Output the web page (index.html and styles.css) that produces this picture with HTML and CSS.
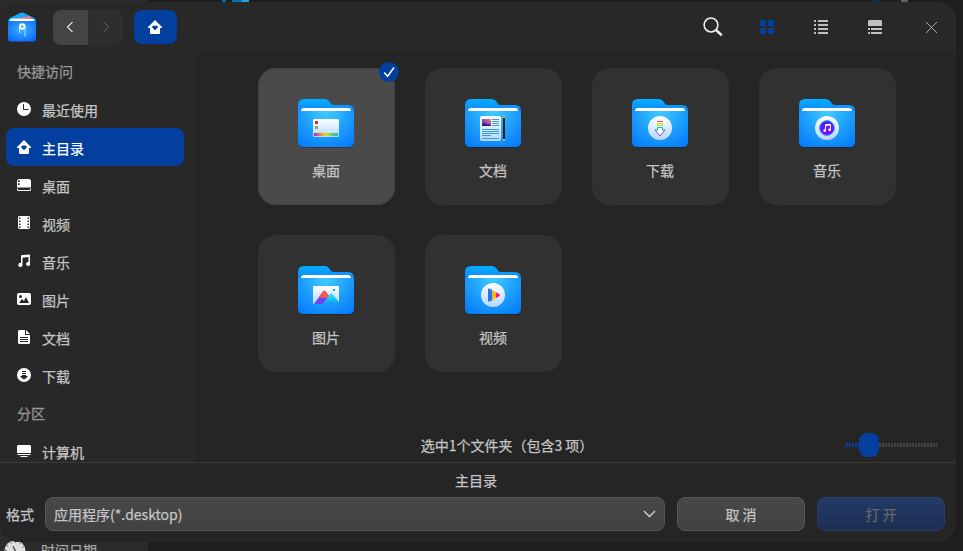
FILE: index.html
```html
<!DOCTYPE html>
<html lang="zh-CN">
<head>
<meta charset="utf-8">
<title>主目录</title>
<link rel="stylesheet" href="styles.css">
</head>
<body>
<svg class="defs" width="0" height="0" aria-hidden="true">
  <defs>
    <linearGradient id="back" x1="0" y1="0" x2="0" y2="1"><stop offset="0" stop-color="#02aeff"/><stop offset=".25" stop-color="#1487fa"/><stop offset="1" stop-color="#0a7cfa"/></linearGradient>
    <radialGradient id="front" gradientUnits="userSpaceOnUse" cx="28" cy="12" r="44"><stop offset="0" stop-color="#42cdff"/><stop offset=".5" stop-color="#1fa1fc"/><stop offset="1" stop-color="#0379fb"/></radialGradient>
    <linearGradient id="paper" x1="0" y1="0" x2="0" y2="1"><stop offset="0" stop-color="#fff"/><stop offset="1" stop-color="#b4d8fc"/></linearGradient>
    <linearGradient id="rainbow"><stop offset="0" stop-color="#9c1df0"/><stop offset=".25" stop-color="#e5863f"/><stop offset=".5" stop-color="#e9e20c"/><stop offset=".75" stop-color="#62cc66"/><stop offset="1" stop-color="#16bdea"/></linearGradient>
    <linearGradient id="photo" x1="0" y1="1" x2="1" y2="0"><stop offset="0" stop-color="#3526d4"/><stop offset=".6" stop-color="#b5519e"/><stop offset="1" stop-color="#ff8a65"/></linearGradient>
    <linearGradient id="arrow" x1="0" y1="0" x2="0" y2="1"><stop offset="0" stop-color="#1fc68f"/><stop offset=".4" stop-color="#2378ea"/><stop offset="1" stop-color="#a22be8"/></linearGradient>
    <linearGradient id="disc" x1="0" y1="0" x2="0" y2="1"><stop offset="0" stop-color="#3926f6"/><stop offset="1" stop-color="#8a05f5"/></linearGradient>
    <linearGradient id="peak" x1="0" y1="0" x2="0" y2="1"><stop offset="0" stop-color="#35eafc"/><stop offset="1" stop-color="#0b9df2"/></linearGradient>
    <radialGradient id="app" cx=".5" cy=".4" r=".7"><stop offset="0" stop-color="#3cb5ff"/><stop offset="1" stop-color="#0865fa"/></radialGradient>
    <symbol id="folder" viewBox="0 0 56 50">
      <path d="M0 46V6Q0 0 6 0H27Q30 0 31.500 2.500L33 4.800Q34 6 36 6H50Q56 6 56 12V43Q56 49 50 49H6Q0 49 0 43Z" fill="#000" opacity=".25"/>
      <path d="M0 42V6Q0 0 6 0H27Q30 0 31.500 2.500L33 4.800Q34 6 36 6H50Q56 6 56 12V42Q56 48 50 48H6Q0 48 0 42Z" fill="url(#back)"/>
      <path d="M3 12Q3 9 6 9H50Q53 9 53 12Z" fill="#fff"/>
      <path d="M0 12H56V42Q56 48 50 48H6Q0 48 0 42Z" fill="url(#front)"/>
    </symbol>
    <symbol id="home" viewBox="0 0 14 14">
      <path fill-rule="evenodd" d="M7 0 14 7V8H12V13Q12 14 11 14H3Q2 14 2 13V8H0V7ZM7 10.200 9.600 7.700Q10 7 9.600 6.300Q9 5.500 8 5.600L7 6 6 5.600Q5 5.500 4.400 6.300Q4 7 4.400 7.700Z"/>
    </symbol>
    <symbol id="notes" viewBox="0 0 14 14">
      <path d="M4 1.200 12 .5Q13 .5 13 1.300V9.500A2 2 0 1 1 11.500 8V3L5.500 3.700V11A2.100 2.100 0 1 1 4 9Z"/>
    </symbol>
  </defs>
</svg>

<div class="backdrop backdrop-top"><span class="scrap scrap-a"></span><span class="scrap scrap-b"></span><span class="scrap scrap-c"></span><span class="scrap scrap-d"></span></div>
<div class="backdrop backdrop-bottom">
  <svg class="clock" width="22" height="22" viewBox="0 0 22 22"><circle cx="11" cy="11" r="10.500" fill="#dedede"/><circle cx="11" cy="11" r="9" fill="none" stroke="#666" stroke-width="1.500" stroke-dasharray="1 3.700"/><path d="M9 6.500 12 12" stroke="#333" stroke-width="1.200"/></svg>
  <span>时间日期</span>
</div>

<div class="window">
  <header class="titlebar">
    <svg class="applogo" width="28" height="32" viewBox="0 0 28 32">
      <path d="M0 10Q0 6 4 5L12 1Q14 0 16 1L24 5Q28 6 28 10Z" fill="#16a8fb"/>
      <path d="M2 8 22 4 24 9H2Z" fill="#ff6b88"/><path d="M2 9Q2 6.500 5 6.500L26 7V11H2Z" fill="#fff"/>
      <path d="M0 9H28V27Q28 29.500 25.500 29.500H2.500Q0 29.500 0 27Z" fill="url(#app)"/><path d="M2 9V8Q2 7 4 7H24Q26 7 26 8V9Z" fill="#fff"/>
      <path d="M11.500 16V21" stroke="#bde4ff"/><path d="M17 16V24.500" stroke="#69c0ff" stroke-width="2"/><circle cx="14.300" cy="14.500" r="2.200" fill="none" stroke="#fff" stroke-width="1.900"/>
    </svg>
    <div class="nav">
      <button class="navbtn back"><svg width="8" height="12" viewBox="0 0 8 12"><path d="M6.500 1 1.500 6 6.500 11" /></svg></button>
      <button class="navbtn forward"><svg width="8" height="12" viewBox="0 0 8 12"><path d="M1.500 1 6.500 6 1.500 11" /></svg></button>
    </div>
    <button class="crumb"><svg width="14" height="14"><use href="#home"/></svg></button>
    <div class="tools">
      <svg class="search" width="20" height="20" viewBox="0 0 20 20"><circle cx="8" cy="8" r="6.900" fill="none" stroke="#f2f2f2" stroke-width="1.500"/><path d="M13 13 18.800 18.300" stroke="#f2f2f2" stroke-width="2.400"/></svg>
      <svg class="grid-icon" width="14" height="14" viewBox="0 0 14 14"><rect width="6" height="6" rx=".6"/><rect x="8" width="6" height="6" rx=".6"/><rect y="8" width="6" height="6" rx=".6"/><rect x="8" y="8" width="6" height="6" rx=".6"/></svg>
      <svg class="list-icon" width="14" height="14" viewBox="0 0 14 14"><path d="M0 0H2V2H0ZM4 0H14V2H4ZM0 4H2V6H0ZM4 4H14V6H4ZM0 8H2V10H0ZM4 8H14V10H4ZM0 12H2V14H0ZM4 12H14V14H4Z"/></svg>
      <svg class="list-icon" width="14" height="14" viewBox="0 0 14 14"><path d="M1 0H13L14 1V6H0V1ZM0 8H2V10H0ZM3 8H14V10H3ZM0 12H2V14H0ZM3 12H14V14H3Z"/></svg>
      <svg class="close" width="11" height="11" viewBox="0 0 11 11"><path d="M0 0 11 11M11 0 0 11"/></svg>
    </div>
  </header>

  <div class="body">
    <nav class="sidebar">
      <h2>快捷访问</h2>
      <a class="item"><svg width="14" height="14" viewBox="0 0 14 14"><path fill-rule="evenodd" d="M7 0A7 7 0 1 1 7 14A7 7 0 1 1 7 0ZM6 2V8H11.500V7H7V2Z"/></svg>最近使用</a>
      <a class="item active"><svg width="14" height="14"><use href="#home"/></svg>主目录</a>
      <a class="item"><svg width="14" height="14" viewBox="0 0 14 14"><path fill-rule="evenodd" d="M1.500 1H12.500L14 2.500V9.500H0V2.500ZM1 2.300V4H2.700V2.300ZM1 5.300V7H2.700V5.300ZM0 10.500H1V12H13V10.500H14V12L13 13H1L0 12Z"/></svg>桌面</a>
      <a class="item"><svg width="14" height="14" viewBox="0 0 14 14"><path fill-rule="evenodd" d="M2 0H12L13 1V12L12 13H2L1 12V1ZM2 1.500V3H3.500V1.500ZM2 4.500V6H3.500V4.500ZM2 7.500V9H3.500V7.500ZM2 10.500V12H3.500V10.500ZM10.500 1.500V3H12V1.500ZM10.500 4.500V6H12V4.500ZM10.500 7.500V9H12V7.500ZM10.500 10.500V12H12V10.500Z"/></svg>视频</a>
      <a class="item"><svg width="14" height="14"><use href="#notes"/></svg>音乐</a>
      <a class="item"><svg width="14" height="14" viewBox="0 0 14 14"><path fill-rule="evenodd" d="M1.200 1H12.800L14 2.200V11.800L12.800 13H1.200L0 11.800V2.200ZM2 11H12L9 5 7 9 5 7ZM3.500 3A1.500 1.500 0 1 0 3.500 6A1.500 1.500 0 1 0 3.500 3Z"/></svg>图片</a>
      <a class="item"><svg width="14" height="14" viewBox="0 0 14 14"><path fill-rule="evenodd" d="M2 0H8V5H13V13L12 14H2L1 13V1ZM3 7V8H11V7ZM3 9V10H11V9ZM3 11V12H11V11ZM9 0 13 4H9Z"/></svg>文档</a>
      <a class="item"><svg width="14" height="14" viewBox="0 0 14 14"><path fill-rule="evenodd" d="M7 0A7 7 0 1 1 7 14A7 7 0 1 1 7 0ZM5 3V4H9V3ZM5 5V6H9V5ZM5 7V8H3.500V9L7 11.500 10.500 9V8H9V7Z"/></svg>下载</a>
      <h2>分区</h2>
      <a class="item"><svg width="14" height="14" viewBox="0 0 14 14"><path d="M1 1H13L14 2V9H0V2ZM0 10H14L13 11H1ZM4 12H10L11 13H3Z"/></svg>计算机</a>
    </nav>

    <main class="content">
      <div class="grid">
        <div class="card selected">
          <svg class="check" width="20" height="20" viewBox="0 0 20 20"><circle cx="10" cy="10" r="10" fill="#033f9f"/><path d="M5.200 10.500 8.600 14.200 15 5.500" fill="none" stroke="#fff" stroke-width="1.500"/></svg>
          <svg width="56" height="50" viewBox="0 0 56 50"><use href="#folder"/><rect x="15" y="20" width="26" height="18" rx="1.200" fill="url(#paper)"/><rect x="17" y="22" width="3" height="3" fill="#c92a45"/><rect x="17" y="27" width="3" height="3" fill="#72b83c"/><rect x="16" y="34" width="24" height="3" fill="url(#rainbow)"/></svg>
          <span>桌面</span>
        </div>
        <div class="card">
          <svg width="56" height="50" viewBox="0 0 56 50"><use href="#folder"/><rect x="15" y="17" width="21" height="25" rx="2" fill="url(#paper)"/><rect x="17" y="20" width="9" height="7" fill="url(#photo)"/><path d="M17 27V26L20 24 22 26 24 25 26 27Z" fill="#2b148f"/><path d="M27 20.500H34M27 22.500H34M27 24.500H34M27 26.500H34M17 30.500H34M17 32.500H34M17 34.500H34M17 36.500H26M17 39.500H34" stroke="#389ae8"/><path d="M39 17V42" stroke="#261c22" stroke-width="2"/><path d="M38 18 39 16 40 18V19H38ZM38 40H40V42H38Z" fill="#e6ae7e"/></svg>
          <span>文档</span>
        </div>
        <div class="card">
          <svg width="56" height="50" viewBox="0 0 56 50"><use href="#folder"/><circle cx="28" cy="29" r="12" fill="url(#paper)"/><path d="M25 22.500H31" stroke="#f25050"/><rect x="25.500" y="24.500" width="5" height="2" fill="#fff" stroke="#c8dc28"/><path d="M25.500 28.500H30.500V31H33L28 37 23 31H25.500Z" fill="#fff" stroke="url(#arrow)"/></svg>
          <span>下载</span>
        </div>
        <div class="card">
          <svg width="56" height="50" viewBox="0 0 56 50"><use href="#folder"/><circle cx="28" cy="29" r="12" fill="url(#paper)"/><circle cx="28" cy="29" r="7.400" fill="url(#disc)" stroke="#2ba9ff" stroke-width="1"/><use href="#notes" x="23.500" y="24.500" width="9" height="9" fill="#fff"/></svg>
          <span>音乐</span>
        </div>
        <div class="card">
          <svg width="56" height="50" viewBox="0 0 56 50"><use href="#folder"/><rect x="15" y="20" width="26" height="18" rx="1" fill="url(#paper)"/><path d="M16 38 25 25.500Q26.500 24 28 26L31 30 25 38Z" fill="#6947f4"/><path d="M20.500 31.500 25 25.500Q26.500 24 28 26L31 30 29.500 32Z" fill="#f55a4f"/><path d="M25 38 32 28Q33 26.500 34.500 28L41 36V38Z" fill="url(#peak)"/><rect x="35" y="23" width="2" height="2" fill="#2795ee"/></svg>
          <span>图片</span>
        </div>
        <div class="card">
          <svg width="56" height="50" viewBox="0 0 56 50"><use href="#folder"/><circle cx="28" cy="29" r="12" fill="url(#paper)"/><path d="M23 23.500Q23 22 24.500 22.500L27 24V34.500L24.500 35.500Q23 36 23 34.500Z" fill="#2176f7"/><path d="M27 24 31 26.300V32L27 34.500Z" fill="#ffb514"/><path d="M31 26.300 34.500 28.300Q35.500 29 34.500 30L31 32Z" fill="#f21780"/></svg>
          <span>视频</span>
        </div>
      </div>
      <div class="status">
        <span>选中1个文件夹（包含3 项）</span>
        <div class="slider"><div class="track done"></div><div class="track"></div><div class="thumb"></div></div>
      </div>
    </main>
  </div>

  <footer class="footer">
    <div class="current">主目录</div>
    <div class="actions">
      <label>格式</label>
      <div class="select"><span>应用程序(*.desktop)</span><svg width="13" height="8" viewBox="0 0 13 8"><path d="M1 1 6.500 6.500 12 1" fill="none" stroke="#d2d2d2" stroke-width="1.400"/></svg></div>
      <button class="btn">取 消</button>
      <button class="btn primary" disabled>打 开</button>
    </div>
  </footer>
</div>
</body>
</html>
```

FILE: styles.css
```css
* { box-sizing: border-box; }
html, body { height: 100%; }
body {
  margin: 0;
  overflow: hidden;
  position: relative;
  padding-top: 2px;
  background: #1e1e1e;
  color: #c5c5c5;
  font: 14px/20px "Noto Sans CJK SC", sans-serif;
  -webkit-text-stroke: .25px currentColor;
}
button { border: 0; padding: 0; font: inherit; color: inherit; }
svg { display: block; flex: none; }
.defs { position: absolute; }

.backdrop { position: absolute; left: 0; width: 148px; background: #2b2b2b; }
.backdrop-top { top: 0; height: 30px; }
.backdrop-bottom { top: 520px; height: 31px; overflow: hidden; color: #a5a5a5; }
.backdrop-bottom span { position: absolute; left: 41px; top: 20px; }
.clock { position: absolute; left: 4px; top: 20px; }
.scrap { position: absolute; top: 0; height: 2px; }
.scrap-a { left: 222px; width: 4px; background: #176b96; }
.scrap-b { left: 232px; width: 17px; background: linear-gradient(90deg, #0870ae 58%, #25a4e4 58%); }
.scrap-c { left: 872px; width: 8px; background: #152c56; }
.scrap-d { left: 901px; width: 7px; background: #626262; }

.window {
  position: relative;
  width: 956px;
  height: 540px;
  border-radius: 18px;
  overflow: hidden;
  background: #252525;
  display: flex;
  flex-direction: column;
}
.titlebar { height: 50px; background: #282828; display: flex; align-items: center; padding: 0 19px 0 8px; flex: none; }
.applogo { margin-top: 2px; }
.nav { display: flex; margin-left: 17px; border-radius: 8px; overflow: hidden; }
.navbtn { width: 35px; height: 35px; display: grid; place-items: center; background: #2e2e2e; }
.navbtn svg { fill: none; stroke: #505050; stroke-width: 1.2; }
.navbtn.back { background: #444; padding-right: 2px; }
.navbtn.back svg { stroke: #dedede; }
.crumb { width: 43px; height: 34px; margin-left: 11px; padding-right: 1px; border-radius: 8px; background: #033f9f; display: grid; place-items: center; fill: #fff; }
.tools { margin-left: auto; display: flex; align-items: center; }
.search { margin-right: 37px; }
.grid-icon { fill: #033f9f; margin-right: 40px; }
.list-icon { fill: #c0c0c0; margin-right: 40px; }
.close { fill: none; stroke: #cacaca; stroke-width: .8; margin-left: 4px; }

.body { height: 410px; display: flex; overflow: hidden; flex: none; }
.sidebar { width: 196px; background: #282828; padding: 0 12px 0 6px; flex: none; }
.sidebar h2 { margin: 0; padding: 0 0 0 11px; font: inherit; line-height: 38px; height: 38px; color: #989898; }
.item { height: 38px; display: flex; align-items: center; padding: 2px 0 0 11px; gap: 11px; line-height: 36px; border-radius: 8px; }
.item svg { fill: #fff; margin-bottom: 2px; }
.item.active { background: #033f9f; color: #fff; }

.content { flex: 1; display: flex; flex-direction: column; }
.grid { display: grid; grid-template-columns: repeat(4, 137px); grid-auto-rows: 137px; gap: 30px; padding: 15.6px 0 0 61.5px; }
.card {
  position: relative;
  border-radius: 18px;
  background: #313131;
  display: flex;
  flex-direction: column;
  align-items: center;
  padding-top: 31.4px;
  gap: 11px;
}
.card.selected { background: #4a4a4a; box-shadow: inset 0 0 0 1px #424242; }
.check { position: absolute; right: -4.5px; top: -5.6px; }
.status { position: relative; margin-top: auto; height: 34px; display: flex; align-items: center; justify-content: center; padding-right: 138px; }
.slider { position: absolute; left: 650px; top: 5px; width: 91px; height: 24px; display: flex; align-items: center; }
.track { height: 4px; flex: 1; background: repeating-linear-gradient(90deg, #444 0 2px, transparent 2px 3px); }
.track.done { flex: none; width: 24px; background: repeating-linear-gradient(90deg, #033f9f 0 2px, transparent 2px 3px); }
.thumb { position: absolute; left: 13px; top: 0; width: 20px; height: 24px; border-radius: 8px; background: #033f9f; }

.footer { flex: 1; border-top: 1px solid #3b3b3b; }
.current { height: 34px; line-height: 34px; text-align: center; padding-right: 4px; }
.actions { display: flex; align-items: center; padding: 0 11px 0 6px; }
.actions label { width: 39px; }
.select {
  width: 620px;
  height: 34px;
  border: 1px solid #575757;
  border-radius: 8px;
  background: linear-gradient(#484848, #414141);
  display: flex;
  align-items: center;
  justify-content: space-between;
  padding: 0 8px;
}
.btn { width: 128px; height: 34px; margin-left: 12px; border: 1px solid #575757; border-radius: 8px; background: linear-gradient(#484848, #414141); }
.btn.primary { border-color: #253c68; background: linear-gradient(#233b69, #1c2d50); color: #64676c; }
```
